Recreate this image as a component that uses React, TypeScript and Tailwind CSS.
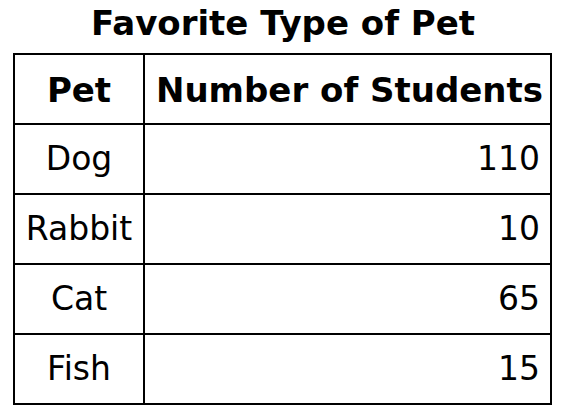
const rows = [
  { pet: "Dog", count: 110 },
  { pet: "Rabbit", count: 10 },
  { pet: "Cat", count: 65 },
  { pet: "Fish", count: 15 },
];

export default function App() {
  return (
    <div className="w-[566px] h-[414px] bg-white text-black font-['DejaVu_Sans',Verdana,sans-serif]">
      <h1 className="pt-[6px] text-center text-[34px] leading-[34px] font-bold">Favorite Type of Pet</h1>

      <div className="mt-[13px] ml-[13px] w-[539px] border-2 border-black">
        {/* header */}
        <div className="flex h-[70px] border-b-2 border-black text-[34px] font-bold">
          <div className="w-[130px] flex items-center justify-center pt-[2px] border-r-2 border-black">Pet</div>
          <div className="flex-1 flex items-center justify-center pt-[2px] pl-[4px]">Number of Students</div>
        </div>

        {rows.map((row, i) => (
          <div
            key={row.pet}
            className={
              i < rows.length - 1
                ? "flex h-[70px] border-b-2 border-black text-[33px]"
                : "flex h-[68px] text-[33px]"
            }
          >
            <div className="w-[130px] flex items-center justify-center border-r-2 border-black">{row.pet}</div>
            <div className="flex-1 flex items-center justify-end pr-[10px]">{row.count}</div>
          </div>
        ))}
      </div>
    </div>
  );
}
